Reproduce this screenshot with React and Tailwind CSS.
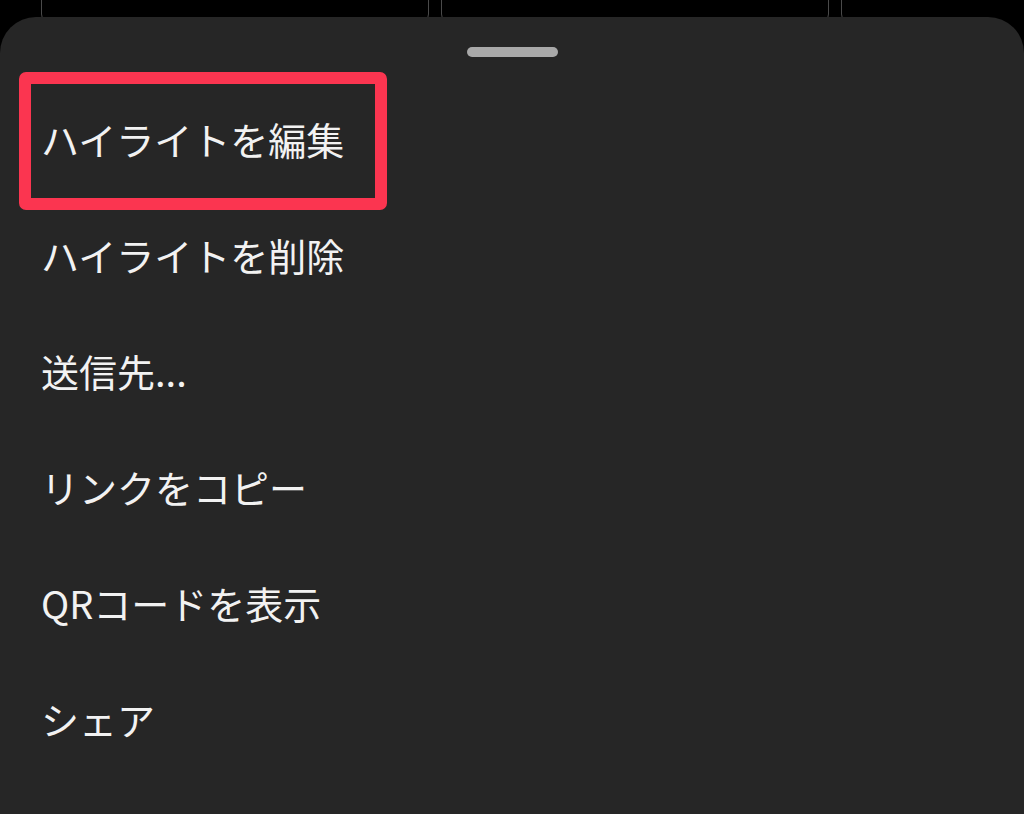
import React from "react";

const items = [
  "ハイライトを編集",
  "ハイライトを削除",
  "送信先...",
  "リンクをコピー",
  "QRコードを表示",
  "シェア",
];

export default function App() {
  return (
    <div
      className="w-[1024px] h-[814px] bg-black overflow-hidden flex flex-col"
      style={{ fontFamily: '"Noto Sans CJK JP", "Noto Sans", sans-serif' }}
    >
      <div className="h-[17px] shrink-0 overflow-hidden flex gap-[12px] pl-[41px]">
        <div className="w-[388px] h-[46px] -mt-[20px] shrink-0 border border-[#4a4a4a] rounded-[12px]" />
        <div className="w-[388px] h-[46px] -mt-[20px] shrink-0 border border-[#4a4a4a] rounded-[12px]" />
        <div className="w-[388px] h-[46px] -mt-[20px] shrink-0 border border-[#4a4a4a] rounded-[12px]" />
      </div>
      <div className="relative flex-1 bg-[#262626] rounded-t-[36px] flex flex-col">
        <div className="flex justify-center pt-[30px]">
          <div className="w-[91px] h-[10px] rounded-full bg-[#a9a9a9]" />
        </div>
        <div className="flex flex-col pt-[24px]">
          {items.map((t) => (
            <div
              key={t}
              className="h-[116px] flex items-center pl-[41px] text-[38px] text-[#f2f2f2] leading-none"
            >
              {t}
            </div>
          ))}
        </div>
        <div className="absolute left-[19px] top-[55px] w-[368px] h-[138px] border-[12px] border-[#fb3550] rounded-[7px]" />
      </div>
    </div>
  );
}
